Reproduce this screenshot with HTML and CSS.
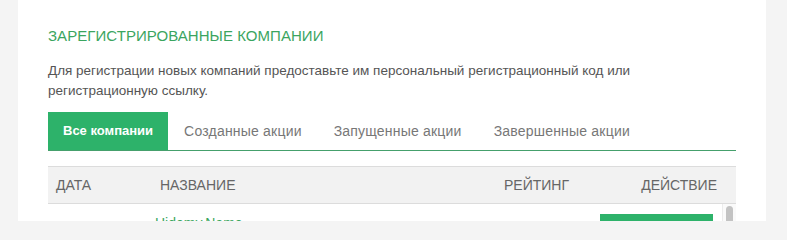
FILE: index.html
```html
<!DOCTYPE html>
<html lang="ru">
<head>
<meta charset="utf-8">
<link rel="stylesheet" href="styles.css">
</head>
<body>
<div class="page">
  <section class="card">
    <h2 class="title">ЗАРЕГИСТРИРОВАННЫЕ КОМПАНИИ</h2>
    <p class="lead">Для регистрации новых компаний предоставьте им персональный регистрационный код или регистрационную ссылку.</p>
    <nav class="tabs">
      <a class="tab active">Все компании</a>
      <a class="tab">Созданные акции</a>
      <a class="tab">Запущенные акции</a>
      <a class="tab">Завершенные акции</a>
    </nav>
    <div class="table">
      <div class="thead">
        <div class="th c-date">Дата</div>
        <div class="th c-name">Название</div>
        <div class="th c-rate">Рейтинг</div>
        <div class="th c-act">Действие</div>
      </div>
      <div class="tbody">
        <div class="rows">
          <div class="row">
            <div class="td b-date"></div>
            <div class="td b-name"><a class="link">Hidemy.Name</a></div>
            <div class="td b-act"><span class="btn"></span></div>
          </div>
        </div>
        <div class="scrollbar"><div class="thumb"></div></div>
      </div>
    </div>
  </section>
</div>
</body>
</html>
```

FILE: styles.css
```css
* { box-sizing: border-box; }
html, body { margin: 0; padding: 0; }
body {
  background: #f4f4f4;
  font-family: "Liberation Sans", Arial, sans-serif;
  color: #555;
  overflow: hidden;
  height: 221px;
}
.page {
  padding: 0 21px 0 18px;
  height: 221px;
}
.card {
  background: #fff;
  padding: 26px 30px 0 30px;
  height: 221px;
  overflow: hidden;
}
.title {
  margin: 0;
  font-size: 15px;
  line-height: 20px;
  font-weight: normal;
  color: #3ba55f;
  letter-spacing: 0.05px;
}
.lead {
  margin: 15px 0 0 0;
  font-size: 13.5px;
  line-height: 20px;
  color: #555;
}
.tabs {
  display: flex;
  margin-top: 11px;
  border-bottom: 1px solid #45a06c;
}
.tab {
  display: block;
  height: 38px;
  line-height: 38px;
  padding: 0 16px;
  font-size: 14px;
  letter-spacing: 0.2px;
  color: #777;
}
.tab.active {
  background: #2db26a;
  color: #fff;
  font-weight: bold;
  font-size: 13px;
  letter-spacing: 0;
  padding: 0 15px;
}
.table {
  margin-top: 15px;
}
.thead {
  display: flex;
  background: #f2f2f2;
  border-top: 1px solid #dcdcdc;
  border-bottom: 1px solid #dcdcdc;
  height: 38px;
  align-items: center;
}
.th {
  font-size: 14px;
  text-transform: uppercase;
  color: #666;
}
.c-date { width: 112px; padding-left: 8px; }
.c-name { flex: 1; }
.c-rate { width: 137px; }
.c-act { width: 95px; padding-right: 19px; text-align: right; }
.tbody {
  display: flex;
  height: 40px;
  overflow: hidden;
}
.rows { flex: 1; }
.scrollbar {
  width: 14px;
  background: #fafafa;
  border-left: 1px solid #ececec;
  padding: 2px 4px 0 3px;
}
.thumb {
  width: 7px;
  height: 60px;
  border-radius: 4px;
  background: #c3c3c3;
}
.row {
  display: flex;
  align-items: flex-start;
  padding: 10px 0;
}
.b-date { width: 107px; }
.b-name { flex: 1; }
.link {
  display: block;
  font-size: 14px;
  line-height: 17px;
  padding-top: 1px;
  color: #3aa55d;
}
.b-act { padding-right: 9px; }
.btn {
  display: block;
  width: 113px;
  height: 30px;
  background: #2db26a;
}
```
